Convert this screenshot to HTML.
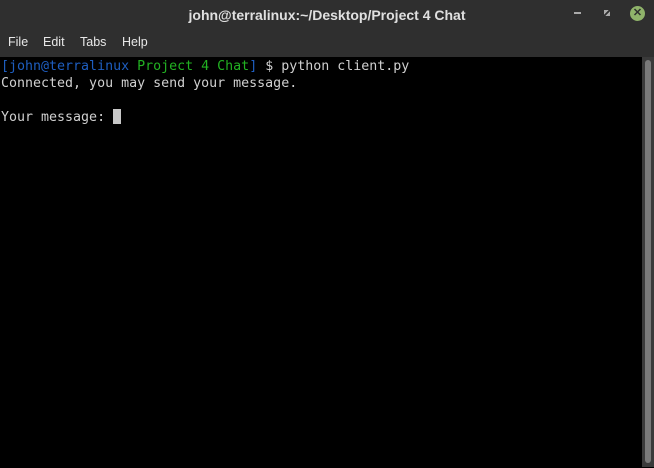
<!DOCTYPE html>
<html><head><style>
body{margin:0;width:654px;height:467px;overflow:hidden;background:#000;font-family:"Liberation Sans",sans-serif}
.title{position:absolute;left:0;top:0;width:654px;height:30px;background:#2f2f2f;color:#e0e0e0;font-weight:bold;font-size:14px;text-align:center;line-height:30px}
.menu{position:absolute;left:0;top:30px;width:654px;height:27px;background:#2f2f2f;color:#e8e8e8;font-size:12.5px}
.menu span{position:absolute;top:5px}
.term{position:absolute;left:0;top:57px;width:642px;height:410px;background:#000;font-family:"DejaVu Sans Mono",monospace;font-size:13.3px;line-height:17px;color:#d0d0d0;white-space:pre;padding-left:1px;padding-top:1px}
.sb{position:absolute;left:642px;top:57px;width:12px;height:410px;background:#3a3a3a}
.th{position:absolute;left:3px;top:3px;width:6px;height:403px;background:#7a7a7a;border-radius:3px}
.cur{display:inline-block;width:8px;height:15px;background:#c8c8c8;vertical-align:-3px}
</style></head><body>
<div class="title">john@terralinux:~/Desktop/Project 4 Chat</div>
<div style="position:absolute;left:574px;top:12px;width:7px;height:2px;background:#aaa"></div>
<div style="position:absolute;left:604px;top:10px;width:6px;height:6px;background:linear-gradient(135deg,#aaa 40%,#2f2f2f 40%,#2f2f2f 60%,#aaa 60%)"></div>
<div style="position:absolute;left:630px;top:6px;width:15px;height:15px;border-radius:50%;background:#8fb36a;color:#2f2f2f;font-size:11px;font-weight:bold;text-align:center;line-height:15px">✕</div>
<div class="menu"><span style="left:8px">File</span><span style="left:43px">Edit</span><span style="left:80px">Tabs</span><span style="left:122px">Help</span></div>
<div class="term"><span style="color:#1e5ec0">[john@terralinux</span> <span style="color:#22b222">Project 4 Chat</span><span style="color:#1e5ec0">]</span> $ python client.py
Connected, you may send your message.

Your message: <span class="cur"></span></div>
<div class="sb"><div class="th"></div></div>
</body></html>
